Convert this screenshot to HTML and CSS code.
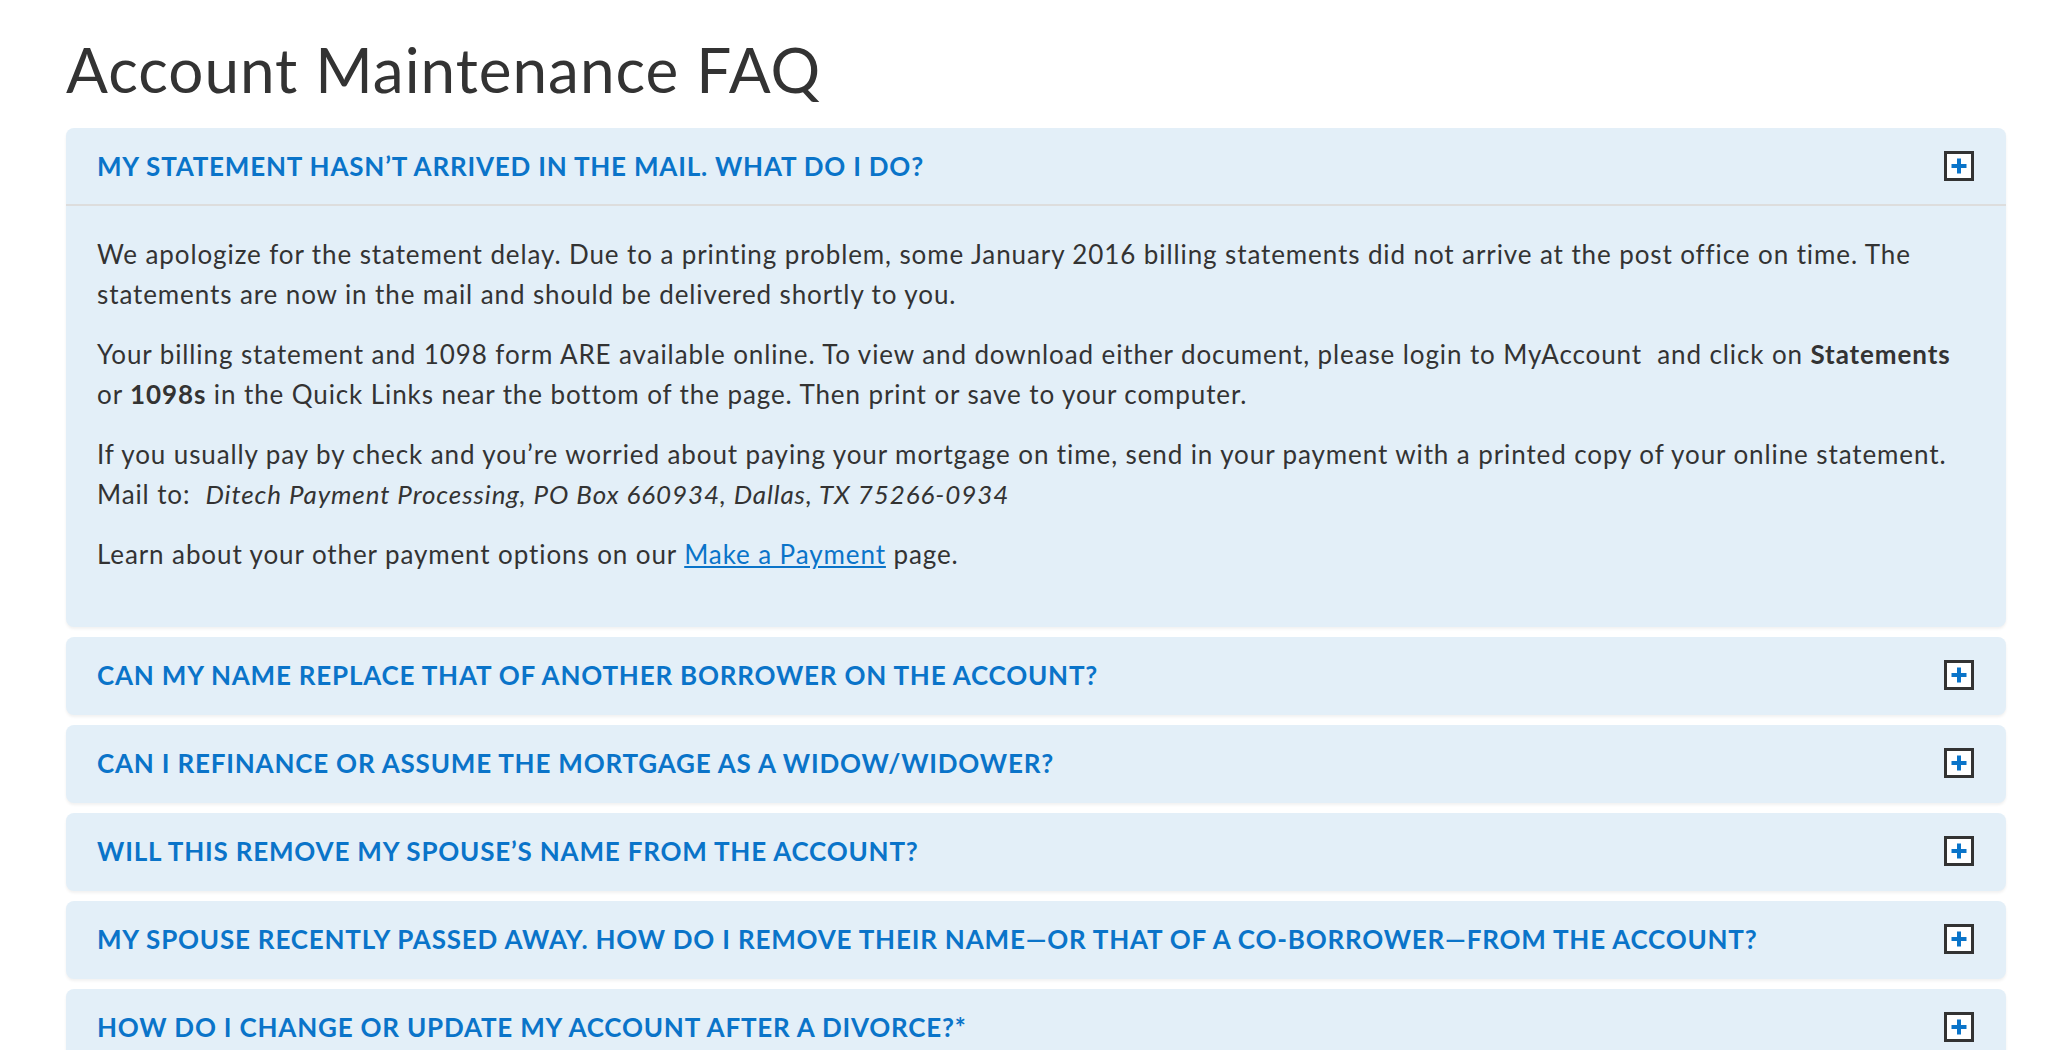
FILE: index.html
```html
<!DOCTYPE html>
<html lang="en">
<head>
<meta charset="utf-8">
<title>Account Maintenance FAQ</title>
<link rel="stylesheet" href="styles.css">
</head>
<body>
<main class="page">
  <h1 class="title">Account Maintenance FAQ</h1>
  <div class="faq">
    <section class="item open">
      <div class="q">
        <span class="q-text">My statement hasn’t arrived in the mail. What do I do?</span>
        <span class="toggle"><svg viewBox="0 0 16 16" width="16" height="16"><path d="M8 0.5v15M0.5 8h15" stroke="#0a74c9" stroke-width="4" fill="none"/></svg></span>
      </div>
      <div class="a">
        <p>We apologize for the statement delay. Due to a printing problem, some January 2016 billing statements did not arrive at the post office on time. The statements are now in the mail and should be delivered shortly to you.</p>
        <p>Your billing statement and 1098 form ARE available online. To view and download either document, please login to MyAccount &nbsp;and click on <strong>Statements</strong> or <strong>1098s</strong> in the Quick Links near the bottom of the page. Then print or save to your computer.</p>
        <p>If you usually pay by check and you’re worried about paying your mortgage on time, send in your payment with a printed copy of your online statement. Mail to: &nbsp;<em>Ditech Payment Processing, PO Box 660934, Dallas, TX 75266-0934</em></p>
        <p>Learn about your other payment options on our <a href="#">Make a Payment</a> page.</p>
      </div>
    </section>
    <section class="item">
      <div class="q">
        <span class="q-text">Can my name replace that of another borrower on the account?</span>
        <span class="toggle"><svg viewBox="0 0 16 16" width="16" height="16"><path d="M8 0.5v15M0.5 8h15" stroke="#0a74c9" stroke-width="4" fill="none"/></svg></span>
      </div>
    </section>
    <section class="item">
      <div class="q">
        <span class="q-text">Can I refinance or assume the mortgage as a widow/widower?</span>
        <span class="toggle"><svg viewBox="0 0 16 16" width="16" height="16"><path d="M8 0.5v15M0.5 8h15" stroke="#0a74c9" stroke-width="4" fill="none"/></svg></span>
      </div>
    </section>
    <section class="item">
      <div class="q">
        <span class="q-text">Will this remove my spouse’s name from the account?</span>
        <span class="toggle"><svg viewBox="0 0 16 16" width="16" height="16"><path d="M8 0.5v15M0.5 8h15" stroke="#0a74c9" stroke-width="4" fill="none"/></svg></span>
      </div>
    </section>
    <section class="item">
      <div class="q">
        <span class="q-text">My spouse recently passed away. How do I remove their name—or that of a co-borrower—from the account?</span>
        <span class="toggle"><svg viewBox="0 0 16 16" width="16" height="16"><path d="M8 0.5v15M0.5 8h15" stroke="#0a74c9" stroke-width="4" fill="none"/></svg></span>
      </div>
    </section>
    <section class="item">
      <div class="q">
        <span class="q-text">How do I change or update my account after a divorce?*</span>
        <span class="toggle"><svg viewBox="0 0 16 16" width="16" height="16"><path d="M8 0.5v15M0.5 8h15" stroke="#0a74c9" stroke-width="4" fill="none"/></svg></span>
      </div>
    </section>
  </div>
</main>
</body>
</html>
```
FILE: styles.css
```css
html, body {
  margin: 0;
  padding: 0;
  background: #ffffff;
}
body {
  font-family: Lato, "Open Sans", sans-serif;
  color: #333333;
}
.page {
  padding: 33px 60px 0 66px;
}
.title {
  margin: 0 0 23px 0;
  font-family: Lato, sans-serif;
  font-weight: 400;
  font-size: 62px;
  letter-spacing: 1px;
  line-height: 72px;
  color: #333333;
}
.faq {
  display: flex;
  flex-direction: column;
  gap: 10px;
}
.item {
  background: #e3eff8;
  border-radius: 8px;
  box-shadow: 0 2px 3px rgba(0, 0, 0, 0.06);
}
.q {
  height: 76px;
  display: flex;
  align-items: center;
  justify-content: space-between;
  padding: 0 32px 0 31px;
  border-bottom: 2px solid transparent;
}
.open .q {
  border-bottom-color: #dddddd;
}
.q-text {
  font-weight: 700;
  font-size: 26px;
  letter-spacing: 0.8px;
  text-transform: uppercase;
  color: #0a74c9;
}
.toggle {
  box-sizing: border-box;
  width: 30px;
  height: 30px;
  border: 3px solid #333333;
  background: #ffffff;
  display: flex;
  align-items: center;
  justify-content: center;
}
.toggle svg {
  display: block;
}
.a {
  padding: 28px 31px 33px 31px;
}
.a p {
  margin: 0 0 20px 0;
  font-size: 26px;
  letter-spacing: 0.9px;
  line-height: 40px;
}
.a strong {
  font-weight: 700;
}
.a a {
  color: #0a74c9;
  text-decoration: underline;
}
```
